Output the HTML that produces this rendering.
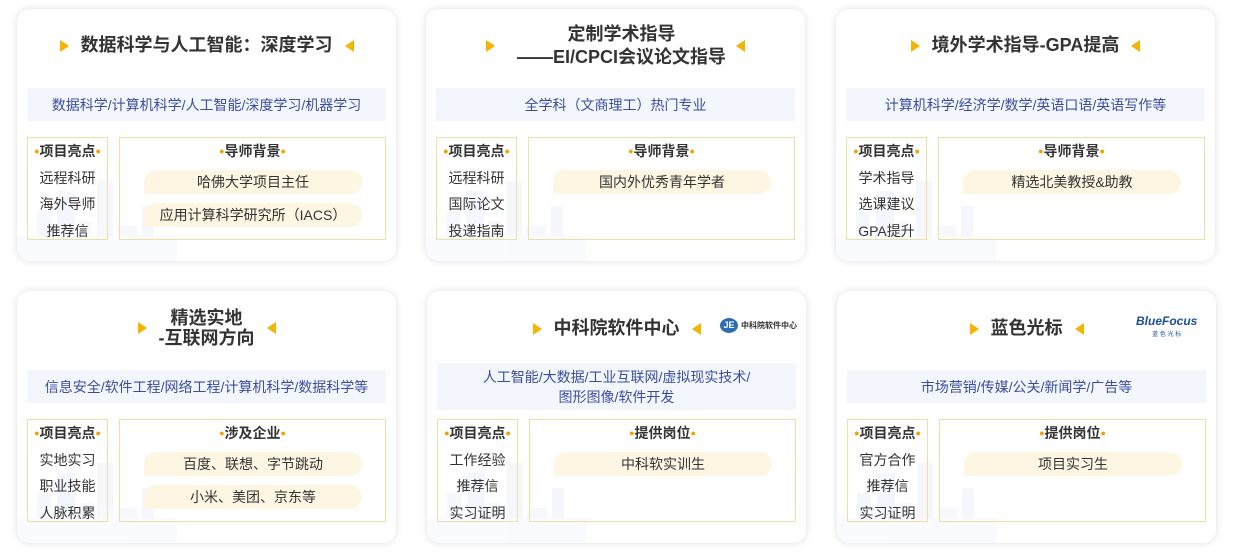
<!DOCTYPE html><html><head><meta charset="utf-8"><style>
*{margin:0;padding:0;box-sizing:border-box}
body{width:1233px;height:553px;background:#fff;position:relative;overflow:hidden;font-family:"Liberation Sans","Noto Sans CJK SC",sans-serif;color:#333}
.card{position:absolute;width:379px;height:252px;background:#fff;border-radius:13px;box-shadow:0 0 8px rgba(0,0,0,.13);overflow:hidden}
.city{position:absolute;left:0;bottom:0;width:160px;height:90px;opacity:.35}
.title{position:absolute;left:0;right:0;text-align:center;font-weight:bold;font-size:18px;color:#333;line-height:22px}
.title .tri{display:inline-block;width:0;height:0;border-top:6px solid transparent;border-bottom:6px solid transparent;vertical-align:middle;margin:0 12px}
.tr{border-left:9px solid #f4b400}.tl{border-right:9px solid #f4b400}
.tag{position:absolute;left:10px;width:359px;background:#f4f6fd;color:#3a4ea0;font-size:14px;text-align:center;display:flex;align-items:center;justify-content:center;line-height:20px;white-space:nowrap}
.lb{position:absolute;left:10px;width:81px;height:103px;border:1px solid #f0dfa5;text-align:center;font-size:14px;line-height:26.5px;white-space:nowrap}
.lb b,.rb b{color:#333}
.dot{color:#f4a000;font-size:9px;vertical-align:2px}
.rb{position:absolute;left:102px;width:267px;height:103px;border:1px solid #f0dfa5;text-align:center;font-size:14px;line-height:26px}
.pill{margin:6px auto 0 24px;width:218px;height:24px;line-height:24px;background:#fdf6e2;border-radius:12px 12px 12px 0;font-size:14px}
.pill+.pill{margin-top:9px}
.logo{position:absolute;font-size:8px}
</style></head><body>

<svg width="0" height="0" style="position:absolute"><defs><g id="city"><rect x="20" y="40" width="14" height="50" fill="#e3eafa"/><rect x="40" y="20" width="18" height="70" fill="#dfe7fa"/><rect x="62" y="50" width="12" height="40" fill="#e6ecfb"/><rect x="80" y="10" width="16" height="80" fill="#e3eafa"/><rect x="100" y="55" width="20" height="35" fill="#e6ecfb"/><rect x="125" y="35" width="12" height="55" fill="#e3eafa"/><rect x="0" y="65" width="160" height="25" fill="#eef2fc"/></g></defs></svg>

<div class="card" style="left:17px;top:9px">
<svg class="city"><use href="#city"/></svg>
<div class="title" style="top:25px"><span class="tri tr"></span>数据科学与人工智能：深度学习<span class="tri tl"></span></div>
<div class="tag" style="top:79px;height:33px">数据科学/计算机科学/人工智能/深度学习/机器学习</div>
<div class="lb" style="top:128px"><b><span class="dot">●</span>项目亮点<span class="dot">●</span></b><br>远程科研<br>海外导师<br>推荐信</div>
<div class="rb" style="top:128px"><b><span class="dot">●</span>导师背景<span class="dot">●</span></b><div class="pill">哈佛大学项目主任</div><div class="pill">应用计算科学研究所（IACS）</div></div>
</div>

<div class="card" style="left:426px;top:9px">
<svg class="city"><use href="#city"/></svg>
<div class="title" style="top:14px;line-height:23px"><span class="tri tr" style="margin-right:22px"></span><span style="display:inline-block;vertical-align:middle">定制学术指导<br>——EI/CPCI会议论文指导</span><span class="tri tl" style="margin-left:10px"></span></div>
<div class="tag" style="top:79px;height:33px">全学科（文商理工）热门专业</div>
<div class="lb" style="top:128px"><b><span class="dot">●</span>项目亮点<span class="dot">●</span></b><br>远程科研<br>国际论文<br>投递指南</div>
<div class="rb" style="top:128px"><b><span class="dot">●</span>导师背景<span class="dot">●</span></b><div class="pill">国内外优秀青年学者</div></div>
</div>

<div class="card" style="left:836px;top:9px">
<svg class="city"><use href="#city"/></svg>
<div class="title" style="top:25px"><span class="tri tr"></span>境外学术指导-GPA提高<span class="tri tl"></span></div>
<div class="tag" style="top:79px;height:33px">计算机科学/经济学/数学/英语口语/英语写作等</div>
<div class="lb" style="top:128px"><b><span class="dot">●</span>项目亮点<span class="dot">●</span></b><br>学术指导<br>选课建议<br>GPA提升</div>
<div class="rb" style="top:128px"><b><span class="dot">●</span>导师背景<span class="dot">●</span></b><div class="pill">精选北美教授&amp;助教</div></div>
</div>

<div class="card" style="left:17px;top:291px">
<svg class="city"><use href="#city"/></svg>
<div class="title" style="top:17px;line-height:20px"><span class="tri tr"></span><span style="display:inline-block;vertical-align:middle">精选实地<br>-互联网方向</span><span class="tri tl"></span></div>
<div class="tag" style="top:79px;height:33px">信息安全/软件工程/网络工程/计算机科学/数据科学等</div>
<div class="lb" style="top:128px"><b><span class="dot">●</span>项目亮点<span class="dot">●</span></b><br>实地实习<br>职业技能<br>人脉积累</div>
<div class="rb" style="top:128px"><b><span class="dot">●</span>涉及企业<span class="dot">●</span></b><div class="pill">百度、联想、字节跳动</div><div class="pill">小米、美团、京东等</div></div>
</div>

<div class="card" style="left:427px;top:291px">
<svg class="city"><use href="#city"/></svg>
<div class="title" style="top:26px"><span class="tri tr"></span>中科院软件中心<span class="tri tl"></span></div>
<div class="logo" style="left:293px;top:27px;display:flex;align-items:center"><span style="display:inline-block;width:18px;height:15px;border-radius:50%;background:#2a6db5;color:#fff;font-size:9px;text-align:center;line-height:15px;font-weight:bold">JE</span><span style="font-size:8px;font-weight:bold;color:#333;margin-left:3px">中科院软件中心</span></div>
<div class="tag" style="top:72px;height:47px">人工智能/大数据/工业互联网/虚拟现实技术/<br>图形图像/软件开发</div>
<div class="lb" style="top:128px"><b><span class="dot">●</span>项目亮点<span class="dot">●</span></b><br>工作经验<br>推荐信<br>实习证明</div>
<div class="rb" style="top:128px"><b><span class="dot">●</span>提供岗位<span class="dot">●</span></b><div class="pill">中科软实训生</div></div>
</div>

<div class="card" style="left:837px;top:291px">
<svg class="city"><use href="#city"/></svg>
<div class="title" style="top:26px"><span class="tri tr"></span>蓝色光标<span class="tri tl"></span></div>
<div class="logo" style="left:299px;top:25px;text-align:center;line-height:11px"><span style="font-size:12px;font-weight:bold;font-style:italic;color:#1d4fa0">BlueFocus</span><br><span style="font-size:6px;color:#1d4fa0">蓝 色 光 标</span></div>
<div class="tag" style="top:79px;height:33px">市场营销/传媒/公关/新闻学/广告等</div>
<div class="lb" style="top:128px"><b><span class="dot">●</span>项目亮点<span class="dot">●</span></b><br>官方合作<br>推荐信<br>实习证明</div>
<div class="rb" style="top:128px"><b><span class="dot">●</span>提供岗位<span class="dot">●</span></b><div class="pill">项目实习生</div></div>
</div>

</body></html>
